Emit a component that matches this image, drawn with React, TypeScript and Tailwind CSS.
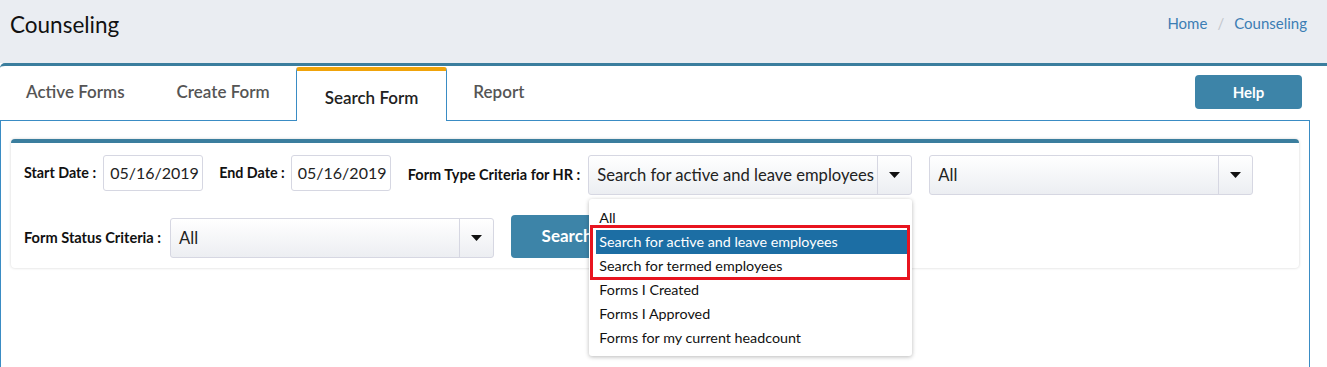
import React from "react";

const tabs = ["Active Forms", "Create Form", "Search Form", "Report"];

const options = [
  "All",
  "Search for active and leave employees",
  "Search for termed employees",
  "Forms I Created",
  "Forms I Approved",
  "Forms for my current headcount",
];

function Select({ value, children }: { value: string; children?: React.ReactNode }) {
  return (
    <div className="relative h-[40px] w-[324px]">
      <div className="flex h-full rounded-[3px] border border-[#d6d7e2] bg-gradient-to-b from-white to-[#eceef2]">
        <div className="flex flex-1 items-center overflow-hidden whitespace-nowrap pl-[8px] text-[16.6px] text-[#222]">{value}</div>
        <div className="flex w-[34px] items-center justify-center border-l border-[#d6d7e2]">
          <svg width="11" height="6" viewBox="0 0 11 6">
            <path d="M0 0h11L5.5 6z" fill="#111" />
          </svg>
        </div>
      </div>
      {children}
    </div>
  );
}

function DateInput({ value }: { value: string }) {
  return (
    <div className="flex h-[36px] w-[100px] items-center rounded-[3px] border border-[#d6d7e2] pl-[6px] text-[16px] text-[#222]">
      {value}
    </div>
  );
}

export default function App() {
  return (
    <div className="h-[367px] w-[1327px] overflow-hidden bg-white font-['Lato','Liberation_Sans',sans-serif]">
      <header className="flex h-[63px] items-start justify-between bg-[#eaedf2] pl-[10px] pr-[20px] pt-[8px]">
        <h1 className="text-[22.5px] text-[#111]">Counseling</h1>
        <nav className="flex items-center gap-[10px] pt-[4px] text-[15px] text-[#3c7db4]">
          <span>Home</span>
          <span className="text-[#c3c6cc]">/</span>
          <span>Counseling</span>
        </nav>
      </header>

      <div className="rounded-tl-[5px] border-t-[3px] border-[#3b7e9e]">
        <div className="flex h-[54px] items-end">
          {tabs.map((t) =>
            t === "Search Form" ? (
              <div
                key={t}
                className="relative z-10 -mb-px flex h-[54px] items-center rounded-t-[3px] border-x border-t-[4px] border-x-[#3a8cc4] border-t-[#f0a30a] bg-white px-[28px] pt-[4px] text-[17px] font-semibold text-[#222]"
              >
                {t}
              </div>
            ) : (
              <div key={t} className="flex h-[54px] items-center px-[26px] pb-[3px] text-[17px] font-semibold text-[#555]">
                {t}
              </div>
            )
          )}
          <button className="ml-auto mr-[25px] mt-[9px] h-[34px] w-[107px] self-start rounded-[4px] bg-[#3d84a8] text-[15px] font-bold text-white">
            Help
          </button>
        </div>

        <div className="h-[300px] w-[1310px] border border-[#3a8cc4] px-[10px] pt-[18px]">
          <div className="rounded-[4px] border-t-[4px] border-[#3b7e9e] bg-white pb-[10px] pl-[13px] pt-[12px] shadow-[0_0_3px_rgba(0,0,0,0.18)]">
            <div className="flex items-start">
              <div className="flex h-[36px] items-center gap-[7px]">
                <span className="text-[14.3px] font-bold text-[#111]">Start Date :</span>
                <DateInput value="05/16/2019" />
              </div>
              <div className="ml-[16px] flex h-[36px] items-center gap-[6px]">
                <span className="text-[14.3px] font-bold text-[#111]">End Date :</span>
                <DateInput value="05/16/2019" />
              </div>
              <div className="ml-[17px] flex h-[40px] items-center gap-[8px]">
                <span className="text-[14.5px] font-bold text-[#111]">Form Type Criteria for HR :</span>
                <Select value="Search for active and leave employees">
                  <div className="absolute left-[1px] top-[44px] z-20 w-[323px] rounded-[3px] bg-white pb-[6px] pt-[7px] shadow-[0_1px_4px_rgba(0,0,0,0.28)]">
                    {options.map((o, i) => (
                      <div
                        key={o}
                        className={
                          i === 1
                            ? "ml-[7px] mr-[4px] flex h-[24px] items-center bg-[#1c6ea4] pl-[3px] text-[14.3px] text-white"
                            : "ml-[7px] mr-[4px] flex h-[24px] items-center pl-[3px] text-[14.3px] text-[#111]"
                        }
                      >
                        {o}
                      </div>
                    ))}
                    <div className="absolute left-[1px] top-[26px] h-[55px] w-[320px] border-[3px] border-[#e8141f]" />
                  </div>
                </Select>
              </div>
              <div className="ml-[17px]">
                <Select value="All" />
              </div>
            </div>

            <div className="mt-[19px] flex items-center">
              <div className="flex items-center gap-[9px] pt-[4px]">
                <span className="text-[14.6px] font-bold text-[#111]">Form Status Criteria :</span>
                <Select value="All" />
              </div>
              <button className="ml-[17px] h-[43px] w-[112px] rounded-[4px] bg-[#3d84a8] text-[17px] font-bold text-white">
                Search
              </button>
            </div>
          </div>
        </div>
      </div>
    </div>
  );
}
